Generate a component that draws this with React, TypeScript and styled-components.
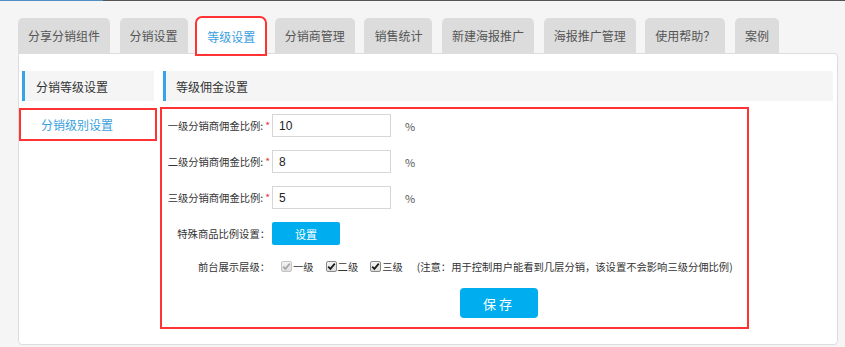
import styled, {createGlobalStyle} from "styled-components";

const GlobalStyle = createGlobalStyle`
    html, body {
        margin: 0;
        padding: 0;
        background: #f5f5f5;
        font-family: "Noto Sans CJK SC", "Noto Sans", sans-serif;
        color: #333;
    }
`

const Page = styled.div`
    width: 845px;
    height: 347px;
    overflow: hidden;
    box-sizing: border-box;
`

const TopLine = styled.div`
    height: 1px;
    background: linear-gradient(to right, #4f8fc6 0, #4f8fc6 103px, #555 103px);
`

const TabBar = styled.div`
    display: flex;
    gap: 9.6px;
    padding: 17px 0 0 18px;
    position: relative;
    z-index: 1;
`

const Tab = styled.div<{ $active?: boolean }>`
    height: 35px;
    padding: 0 10px;
    margin-bottom: -1px;
    box-sizing: border-box;
    display: flex;
    align-items: center;
    font-size: 12px;
    color: ${p => p.$active ? "#3a9ee0" : "#555"};
    background: ${p => p.$active ? "#fff" : "#dcdcdc"};
    border-radius: 5px 5px 0 0;
    white-space: nowrap;
    ${p => p.$active && `
        height: 36px;
        margin-top: 0;
        outline: 2px solid #f33;
    `}
`

const Panel = styled.div`
    margin: 0 7px 0 18px;
    background: #fff;
    border: 1px solid #ddd;
    border-radius: 0 4px 4px 4px;
    padding: 17px 4px 18px 3px;
    display: flex;
    gap: 9px;
`

const Sidebar = styled.div`
    width: 132px;
    flex-shrink: 0;
`

const SectionTitle = styled.div`
    height: 30px;
    display: flex;
    align-items: center;
    background: #f5f5f5;
    border-left: 3px solid #35a4e8;
    font-size: 12px;
    color: #333;
    padding-left: ${p => p.theme?.pad ?? "11px"};
`

const SideItem = styled.div<{ $marked?: boolean }>`
    margin-top: 10px;
    height: 27px;
    display: flex;
    align-items: center;
    padding-left: 19px;
    font-size: 12px;
    color: #3a9fe0;
    ${p => p.$marked && `
        outline: 2px solid #f33;
        outline-offset: 1px;
    `}
`

const Main = styled.div`
    flex: 1;
`

const Form = styled.div`
    margin-top: 9px;
    width: 583px;
    outline: 2px solid #f33;
    outline-offset: 1px;
    padding: 4px 0 8px;
    display: flex;
    flex-direction: column;
    gap: 13px;
`

const Row = styled.div`
    display: flex;
    align-items: center;
    height: 23px;
`

const Label = styled.div`
    width: 107px;
    margin-right: 2px;
    text-align: right;
    font-size: 10.3px;
    color: #333;
    white-space: nowrap;
`

const Required = styled.span`
    color: #e33;
    margin-left: 2px;
`

const Input = styled.input`
    width: 119px;
    height: 23px;
    box-sizing: border-box;
    border: 1px solid #d6d6d6;
    padding: 0 6px;
    font-family: "Liberation Sans", Arial, sans-serif;
    font-size: 12px;
    color: #222;
    outline: none;
`

const Unit = styled.span`
    margin-left: 14px;
    font-size: 11px;
    color: #555;
`

const Button = styled.button<{ $big?: boolean }>`
    border: none;
    background: #00aeef;
    color: #fff;
    font-family: inherit;
    cursor: pointer;
    width: ${p => p.$big ? "78px" : "68px"};
    height: ${p => p.$big ? "30px" : "23px"};
    border-radius: ${p => p.$big ? "4px" : "2px"};
    font-size: ${p => p.$big ? "13px" : "11px"};
    letter-spacing: ${p => p.$big ? "3px" : "0"};
    padding: 0;
`

const LevelRow = styled.div`
    display: flex;
    align-items: center;
    height: 17px;
`

const CheckGroup = styled.div`
    display: flex;
    align-items: center;
    padding-left: 9px;
    font-size: 10.3px;
    color: #333;
`

const CheckItem = styled.label`
    display: flex;
    align-items: center;
    margin-right: 12px;
    white-space: nowrap;
`

const Box = styled.span<{ $disabled?: boolean }>`
    width: 11px;
    height: 11px;
    box-sizing: border-box;
    border: 1px solid ${p => p.$disabled ? "#c4c4c4" : "#8a8a8a"};
    border-radius: 2px;
    background: linear-gradient(#f4f4f4, #dedede);
    display: flex;
    align-items: center;
    justify-content: center;
    margin-right: 1px;
`

const Note = styled.span`
    margin-left: 2px;
    font-size: 10.3px;
    color: #333;
    white-space: nowrap;
`

const SaveRow = styled.div`
    display: flex;
    padding-left: 297px;
`

const Check = ({disabled}: { disabled?: boolean }) => (
    <Box $disabled={disabled}>
        <svg width="9" height="9" viewBox="0 0 9 9">
            <path d="M1.2 4.6 L3.4 6.9 L7.8 1.6" fill="none" stroke={disabled ? "#a8a8a8" : "#1a1a1a"}
                  strokeWidth="1.7"/>
        </svg>
    </Box>
)

const tabs = ["分享分销组件", "分销设置", "等级设置", "分销商管理", "销售统计", "新建海报推广", "海报推广管理", "使用帮助？", "案例"]

const rates = [
    {label: "一级分销商佣金比例:", value: "10"},
    {label: "二级分销商佣金比例:", value: "8"},
    {label: "三级分销商佣金比例:", value: "5"},
]

const App = () => {
    return (
        <Page>
            <GlobalStyle/>
            <TopLine/>
            <TabBar>
                {tabs.map(t => <Tab key={t} $active={t === "等级设置"}>{t}</Tab>)}
            </TabBar>
            <Panel>
                <Sidebar>
                    <SectionTitle>分销等级设置</SectionTitle>
                    <SideItem $marked>分销级别设置</SideItem>
                </Sidebar>
                <Main>
                    <SectionTitle theme={{pad: "10px"}}>等级佣金设置</SectionTitle>
                    <Form>
                        {rates.map(r => (
                            <Row key={r.label}>
                                <Label>{r.label}<Required>*</Required></Label>
                                <Input defaultValue={r.value}/>
                                <Unit>%</Unit>
                            </Row>
                        ))}
                        <Row>
                            <Label>特殊商品比例设置：</Label>
                            <Button>设置</Button>
                        </Row>
                        <LevelRow>
                            <Label>前台展示层级：</Label>
                            <CheckGroup>
                                <CheckItem><Check disabled/>一级</CheckItem>
                                <CheckItem><Check/>二级</CheckItem>
                                <CheckItem><Check/>三级</CheckItem>
                                <Note>(注意：用于控制用户能看到几层分销，该设置不会影响三级分佣比例)</Note>
                            </CheckGroup>
                        </LevelRow>
                        <SaveRow>
                            <Button $big>保存</Button>
                        </SaveRow>
                    </Form>
                </Main>
            </Panel>
        </Page>
    )
}

export default App
